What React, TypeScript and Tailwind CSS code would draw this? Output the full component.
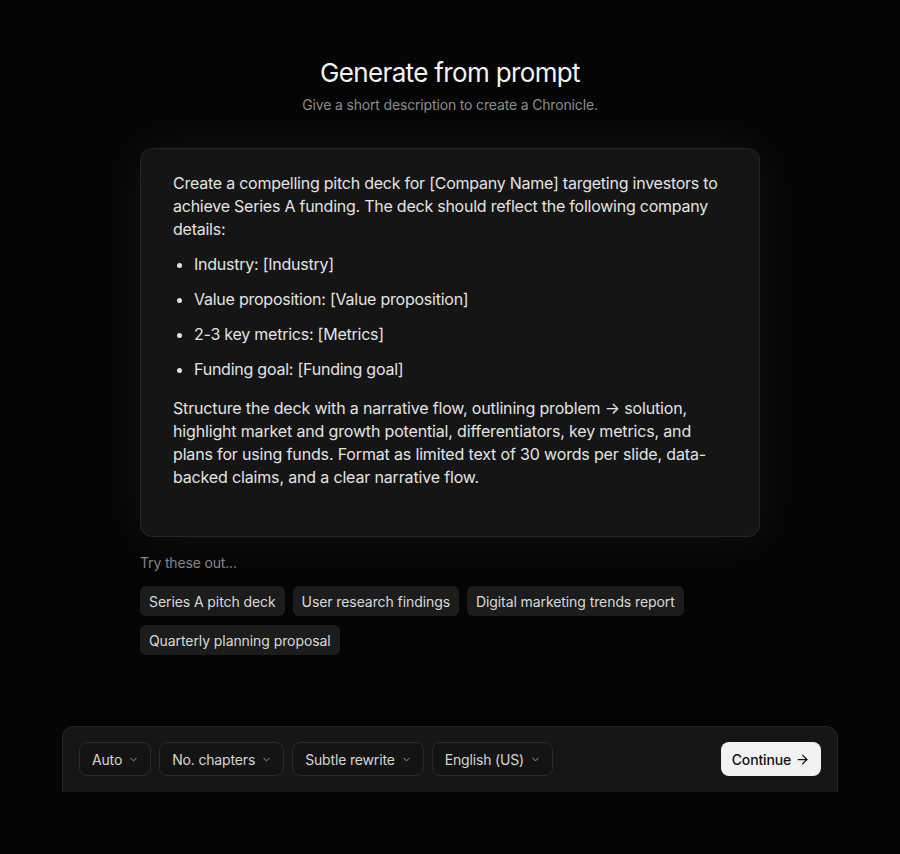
import { ChevronDown, ArrowRight } from "lucide-react";

const suggestions = [
  "Series A pitch deck",
  "User research findings",
  "Digital marketing trends report",
  "Quarterly planning proposal",
];

const bullets = [
  "Industry: [Industry]",
  "Value proposition: [Value proposition]",
  "2-3 key metrics: [Metrics]",
  "Funding goal: [Funding goal]",
];

const selects = ["Auto", "No. chapters", "Subtle rewrite", "English (US)"];

export default function App() {
  return (
    <div className="min-h-screen w-full bg-[#050505] font-['Inter',sans-serif] tracking-[-0.01em] text-[#e8e8e8]">
      <div className="flex flex-col items-center pt-[56px]">
        <h1 className="text-[26px] leading-[34px] font-normal tracking-[-0.025em] text-[#f2f2f2]">
          Generate from prompt
        </h1>
        <p className="mt-[5px] text-[14px] leading-5 text-[#8c8c8c]">
          Give a short description to create a Chronicle.
        </p>

        <div className="mt-[33px] w-[620px] h-[389px] rounded-xl border border-[#262626] bg-[#151515] pl-8 pr-7 pt-[23px] shadow-[0_0_50px_rgba(255,255,255,0.06)]">
          <p className="text-[16px] leading-[23px] tracking-[-0.015em] text-[#e3e3e3]">
            Create a compelling pitch deck for [Company Name] targeting investors to achieve
            Series A funding. The deck should reflect the following company details:
          </p>
          <ul className="mt-[12px] flex flex-col gap-[12px] pl-[21px] list-disc text-[16px] leading-[23px] tracking-[-0.015em] text-[#e3e3e3]">
            {bullets.map((b) => (
              <li key={b}>{b}</li>
            ))}
          </ul>
          <p className="mt-[16px] text-[16px] leading-[23px] tracking-[-0.01em] text-[#e3e3e3]">
            Structure the deck with a narrative flow, outlining problem → solution, highlight
            market and growth potential, differentiators, key metrics, and plans for using funds.
            Format as limited text of 30 words per slide, data-backed claims, and a clear
            narrative flow.
          </p>
        </div>

        <div className="mt-[16px] w-[620px]">
          <p className="text-[14px] leading-5 text-[#858585]">Try these out...</p>
          <div className="mt-[13px] flex flex-wrap gap-x-2 gap-y-[9px]">
            {suggestions.map((s) => (
              <button
                key={s}
                className="h-[30px] rounded-md bg-[#1c1c1c] px-[9px] text-[14px] tracking-[-0.006em] text-[#d9d9d9]"
              >
                {s}
              </button>
            ))}
          </div>
        </div>

        <div className="mt-[71px] w-[776px] h-[66px] rounded-t-xl border border-b-0 border-[#242424] bg-[#161616] px-4 pt-[15px]">
          <div className="flex items-center justify-between">
            <div className="flex gap-2">
              {selects.map((s) => (
                <button
                  key={s}
                  className="flex h-[34px] items-center gap-[6px] rounded-lg border border-[#2a2a2a] bg-[#141414] pl-3 pr-[11px] text-[14px] text-[#d4d4d4]"
                >
                  {s}
                  <ChevronDown size={11} strokeWidth={2} className="text-[#a3a3a3]" />
                </button>
              ))}
            </div>
            <button className="flex h-[34px] items-center gap-[4px] rounded-lg bg-[#f2f2f2] px-[11px] text-[14px] font-medium text-[#111]">
              Continue
              <ArrowRight size={15} strokeWidth={2} />
            </button>
          </div>
        </div>
      </div>
    </div>
  );
}
